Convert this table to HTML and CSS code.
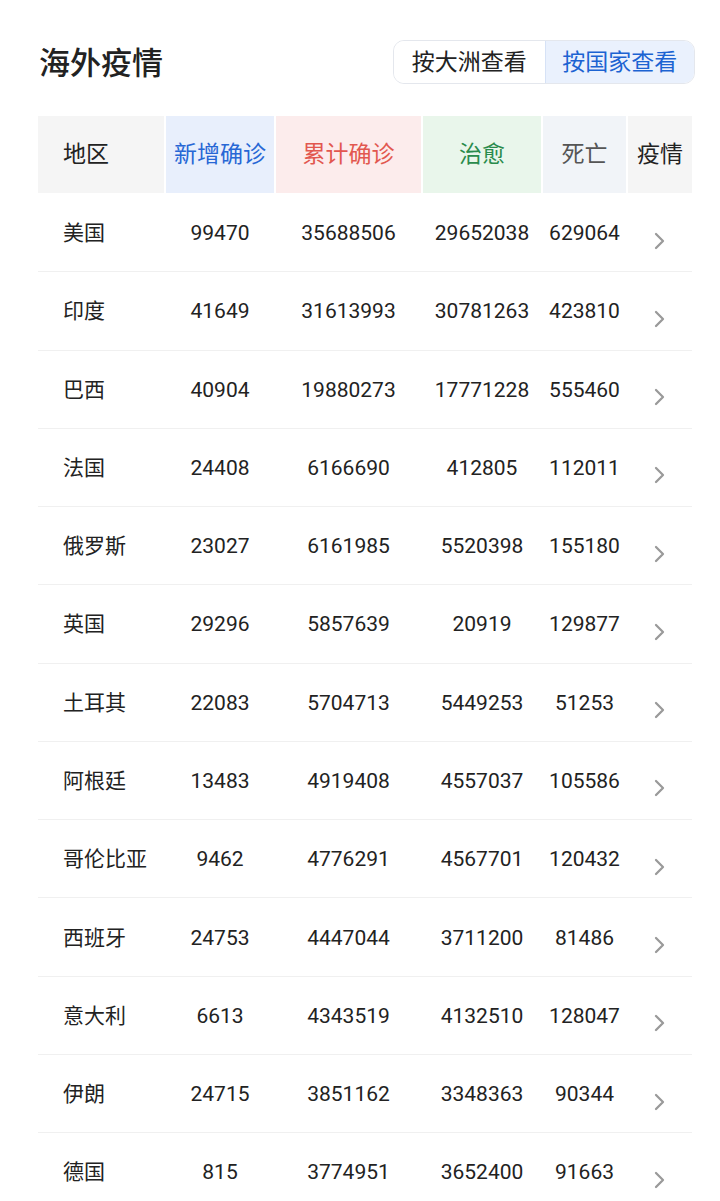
FILE: index.html
```html
<!DOCTYPE html>
<html lang="zh-CN">
<head>
<meta charset="utf-8">
<title>海外疫情</title>
<link rel="stylesheet" href="styles.css">
</head>
<body>
<div class="page">
  <div class="top">
    <h1 class="title">海外疫情</h1>
    <div class="toggle">
      <span class="seg">按大洲查看</span>
      <span class="seg active">按国家查看</span>
    </div>
  </div>
  <div class="table">
    <div class="row head">
      <div class="hc c-name">地区</div>
      <div class="hc c-new">新增确诊</div>
      <div class="hc c-total">累计确诊</div>
      <div class="hc c-cure">治愈</div>
      <div class="hc c-dead">死亡</div>
      <div class="hc c-more">疫情</div>
    </div>
    <div class="row"><div class="name">美国</div><div class="num">99470</div><div class="num">35688506</div><div class="num">29652038</div><div class="num">629064</div><div class="arrow"><svg viewBox="0 0 12 18" width="12" height="18"><polyline points="2,2 9,9 2,16"/></svg></div></div>
    <div class="row"><div class="name">印度</div><div class="num">41649</div><div class="num">31613993</div><div class="num">30781263</div><div class="num">423810</div><div class="arrow"><svg viewBox="0 0 12 18" width="12" height="18"><polyline points="2,2 9,9 2,16"/></svg></div></div>
    <div class="row"><div class="name">巴西</div><div class="num">40904</div><div class="num">19880273</div><div class="num">17771228</div><div class="num">555460</div><div class="arrow"><svg viewBox="0 0 12 18" width="12" height="18"><polyline points="2,2 9,9 2,16"/></svg></div></div>
    <div class="row"><div class="name">法国</div><div class="num">24408</div><div class="num">6166690</div><div class="num">412805</div><div class="num">112011</div><div class="arrow"><svg viewBox="0 0 12 18" width="12" height="18"><polyline points="2,2 9,9 2,16"/></svg></div></div>
    <div class="row"><div class="name">俄罗斯</div><div class="num">23027</div><div class="num">6161985</div><div class="num">5520398</div><div class="num">155180</div><div class="arrow"><svg viewBox="0 0 12 18" width="12" height="18"><polyline points="2,2 9,9 2,16"/></svg></div></div>
    <div class="row"><div class="name">英国</div><div class="num">29296</div><div class="num">5857639</div><div class="num">20919</div><div class="num">129877</div><div class="arrow"><svg viewBox="0 0 12 18" width="12" height="18"><polyline points="2,2 9,9 2,16"/></svg></div></div>
    <div class="row"><div class="name">土耳其</div><div class="num">22083</div><div class="num">5704713</div><div class="num">5449253</div><div class="num">51253</div><div class="arrow"><svg viewBox="0 0 12 18" width="12" height="18"><polyline points="2,2 9,9 2,16"/></svg></div></div>
    <div class="row"><div class="name">阿根廷</div><div class="num">13483</div><div class="num">4919408</div><div class="num">4557037</div><div class="num">105586</div><div class="arrow"><svg viewBox="0 0 12 18" width="12" height="18"><polyline points="2,2 9,9 2,16"/></svg></div></div>
    <div class="row"><div class="name">哥伦比亚</div><div class="num">9462</div><div class="num">4776291</div><div class="num">4567701</div><div class="num">120432</div><div class="arrow"><svg viewBox="0 0 12 18" width="12" height="18"><polyline points="2,2 9,9 2,16"/></svg></div></div>
    <div class="row"><div class="name">西班牙</div><div class="num">24753</div><div class="num">4447044</div><div class="num">3711200</div><div class="num">81486</div><div class="arrow"><svg viewBox="0 0 12 18" width="12" height="18"><polyline points="2,2 9,9 2,16"/></svg></div></div>
    <div class="row"><div class="name">意大利</div><div class="num">6613</div><div class="num">4343519</div><div class="num">4132510</div><div class="num">128047</div><div class="arrow"><svg viewBox="0 0 12 18" width="12" height="18"><polyline points="2,2 9,9 2,16"/></svg></div></div>
    <div class="row"><div class="name">伊朗</div><div class="num">24715</div><div class="num">3851162</div><div class="num">3348363</div><div class="num">90344</div><div class="arrow"><svg viewBox="0 0 12 18" width="12" height="18"><polyline points="2,2 9,9 2,16"/></svg></div></div>
    <div class="row"><div class="name">德国</div><div class="num">815</div><div class="num">3774951</div><div class="num">3652400</div><div class="num">91663</div><div class="arrow"><svg viewBox="0 0 12 18" width="12" height="18"><polyline points="2,2 9,9 2,16"/></svg></div></div>
  </div>
</div>
</body>
</html>
```
FILE: styles.css
```css
* { box-sizing: border-box; }
html, body {
  margin: 0;
  padding: 0;
  background: #fff;
  height: 1201px;
  overflow: hidden;
}
body {
  font-family: Roboto, "Noto Sans CJK SC", "Noto Sans", sans-serif;
  color: #222;
}
.page {
  padding: 40px 25px 0 38px;
}
.top {
  display: flex;
  justify-content: space-between;
  align-items: center;
  height: 44px;
}
.title {
  margin: 0 0 0 1px;
  padding-bottom: 4px;
  font-family: "Noto Sans CJK SC", sans-serif;
  font-size: 31px;
  font-weight: 500;
  color: #222;
  line-height: 1;
}
.toggle {
  display: flex;
  height: 44px;
  width: 302px;
  border: 1.5px solid #e4e7ed;
  border-radius: 11px;
  overflow: hidden;
}
.seg {
  display: flex;
  align-items: center;
  justify-content: center;
  padding-bottom: 4px;
  font-family: "Noto Sans CJK SC", sans-serif;
  font-size: 23px;
  color: #222;
  width: 151px;
  background: #fff;
}
.seg.active {
  width: 150px;
  color: #1c63d2;
  background: #eaf1fd;
  border-left: 1.5px solid #d6e2f6;
}
.table {
  margin-top: 32px;
  width: 654px;
}
.row {
  display: grid;
  grid-template-columns: 126px 108px 145px 118px 83px 64px;
  column-gap: 2px;
  height: 78.27px;
  border-bottom: 1px solid #f0f0f0;
  align-items: center;
}
.row.head {
  height: 77px;
  border-bottom: none;
  align-items: stretch;
  margin-bottom: 1px;
}
.hc {
  display: flex;
  align-items: center;
  justify-content: center;
  padding-bottom: 5px;
  font-family: "Noto Sans CJK SC", sans-serif;
  font-size: 23px;
}
.c-name { background: #f5f5f5; justify-content: flex-start; padding-left: 25px; color: #222; }
.c-new { background: #e8effc; color: #2767d5; }
.c-total { background: #fcecec; color: #e2574f; }
.c-cure { background: #e9f6eb; color: #2a8b4c; }
.c-dead { background: #f1f4f8; color: #555; }
.c-more { background: #f5f5f5; color: #222; }
.name {
  padding-left: 25px;
  font-family: "Noto Sans CJK SC", sans-serif;
  font-size: 21px;
  color: #222;
  margin-top: -3px;
}
.num {
  text-align: center;
  font-size: 21px;
  color: #222;
  margin-top: 1px;
}
.arrow {
  display: flex;
  justify-content: center;
  padding-top: 16px;
}
.arrow svg polyline {
  fill: none;
  stroke: #9a9a9a;
  stroke-width: 2.3;
  stroke-linecap: round;
  stroke-linejoin: round;
}
```
